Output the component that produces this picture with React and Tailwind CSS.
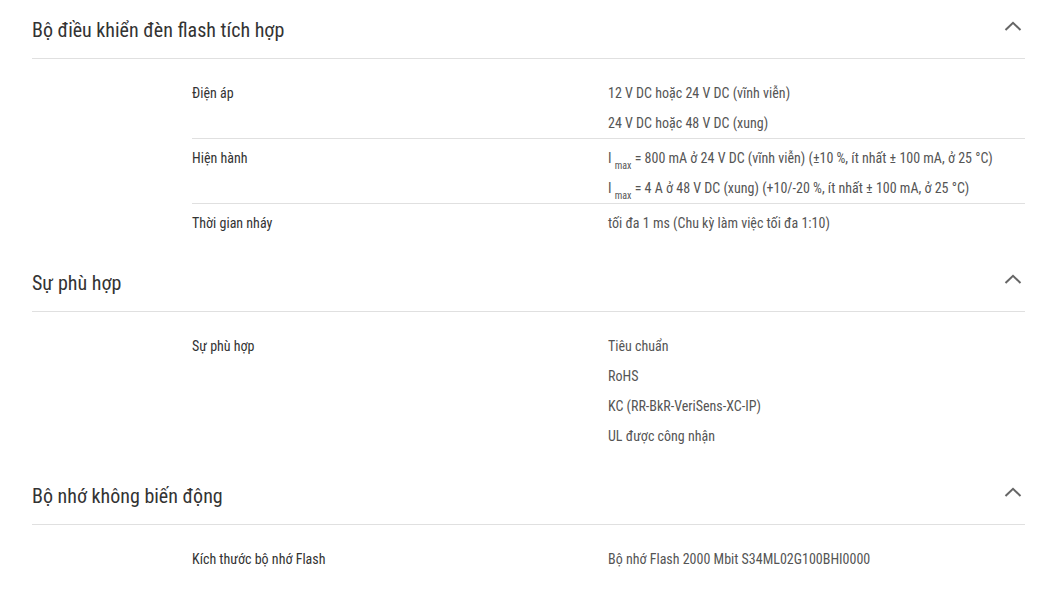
import React from "react";

const font = { fontFamily: '"Roboto Condensed", "Liberation Sans Narrow", Roboto, sans-serif' };

function Chevron() {
  return (
    <svg width="18" height="10" viewBox="0 0 18 10" className="block">
      <polyline points="1.5,9 9,1.8 16.5,9" fill="none" stroke="#666" strokeWidth="2" />
    </svg>
  );
}

function Imax() {
  return (
    <>
      I <sub className="text-[10px] align-[-3px]">max</sub>
    </>
  );
}

const sections = [
  {
    title: "Bộ điều khiển đèn flash tích hợp",
    rows: [
      { label: "Điện áp", values: ["12 V DC hoặc 24 V DC (vĩnh viễn)", "24 V DC hoặc 48 V DC (xung)"] },
      {
        label: "Hiện hành",
        values: [
          <><Imax /> = 800 mA ở 24 V DC (vĩnh viễn) (±10 %, ít nhất ± 100 mA, ở 25 °C)</>,
          <><Imax /> = 4 A ở 48 V DC (xung) (+10/-20 %, ít nhất ± 100 mA, ở 25 °C)</>,
        ],
      },
      { label: "Thời gian nháy", values: ["tối đa 1 ms (Chu kỳ làm việc tối đa 1:10)"] },
    ],
  },
  {
    title: "Sự phù hợp",
    rows: [
      { label: "Sự phù hợp", values: ["Tiêu chuẩn", "RoHS", "KC (RR-BkR-VeriSens-XC-IP)", "UL được công nhận"] },
    ],
  },
  {
    title: "Bộ nhớ không biến động",
    rows: [
      { label: "Kích thước bộ nhớ Flash", values: ["Bộ nhớ Flash 2000 Mbit S34ML02G100BHI0000"] },
    ],
  },
];

export default function App() {
  return (
    <div className="w-[1057px] bg-white px-8 text-[14px]" style={font}>
      {sections.map((s, si) => (
        <section key={si}>
          <div className="flex h-[59px] items-center justify-between border-b border-[#e0e0e0] pt-[2px]">
            <h2 className="text-[20px] leading-7 text-[#333]">{s.title}</h2>
            <div className="mr-[3px] -mt-[9px]">
              <Chevron />
            </div>
          </div>
          <div className="pl-[160px] pt-[15px] pb-[15px]">
            {s.rows.map((r, ri) => (
              <div
                key={ri}
                className={
                  "flex pt-[4px] " + (ri < s.rows.length - 1 ? "border-b border-[#e0e0e0]" : "")
                }
              >
                <div className="w-[416px] shrink-0 leading-[30px] text-[#333]">{r.label}</div>
                <div className="flex-1">
                  {r.values.map((v, vi) => (
                    <div key={vi} className="leading-[30px] text-[#555]">
                      {v}
                    </div>
                  ))}
                </div>
              </div>
            ))}
          </div>
        </section>
      ))}
    </div>
  );
}
